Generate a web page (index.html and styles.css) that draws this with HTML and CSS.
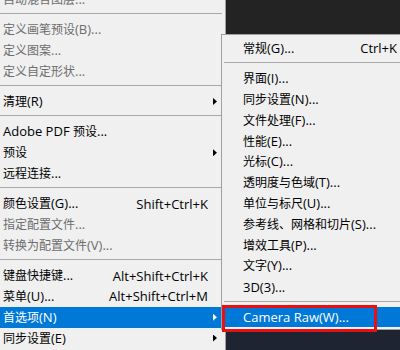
FILE: index.html
```html
<!DOCTYPE html>
<html lang="zh-CN">
<head>
  <meta charset="UTF-8">
  <title>编辑 – 首选项</title>
  <link rel="stylesheet" href="styles.css">
</head>
<body>

  <div class="desktop">
    <ul class="menu main-menu">
      <li class="item off"><span class="label"><span class="zh">自动混合图层</span>...</span></li>
      <li class="sep"></li>
      <li class="item off"><span class="label"><span class="zh">定义画笔预设</span>(B)...</span></li>
      <li class="item off"><span class="label"><span class="zh">定义图案</span>...</span></li>
      <li class="item off"><span class="label"><span class="zh">定义自定形状</span>...</span></li>
      <li class="sep"></li>
      <li class="item more"><span class="label"><span class="zh">清理</span>(R)</span></li>
      <li class="sep"></li>
      <li class="item"><span class="label">Adobe PDF <span class="zh">预设</span>...</span></li>
      <li class="item more"><span class="label"><span class="zh">预设</span></span></li>
      <li class="item"><span class="label"><span class="zh">远程连接</span>...</span></li>
      <li class="sep"></li>
      <li class="item"><span class="label"><span class="zh">颜色设置</span>(G)...</span><span class="key">Shift+Ctrl+K</span></li>
      <li class="item off"><span class="label"><span class="zh">指定配置文件</span>...</span></li>
      <li class="item off"><span class="label"><span class="zh">转换为配置文件</span>(V)...</span></li>
      <li class="sep"></li>
      <li class="item"><span class="label"><span class="zh">键盘快捷键</span>...</span><span class="key">Alt+Shift+Ctrl+K</span></li>
      <li class="item"><span class="label"><span class="zh">菜单</span>(U)...</span><span class="key">Alt+Shift+Ctrl+M</span></li>
      <li class="item more on"><span class="label"><span class="zh">首选项</span>(N)</span></li>
      <li class="item more"><span class="label"><span class="zh">同步设置</span>(E)</span></li>
    </ul>

    <ul class="menu sub-menu">
      <li class="item"><span class="label"><span class="zh">常规</span>(G)...</span><span class="key">Ctrl+K</span></li>
      <li class="sep"></li>
      <li class="item"><span class="label"><span class="zh">界面</span>(I)...</span></li>
      <li class="item"><span class="label"><span class="zh">同步设置</span>(N)...</span></li>
      <li class="item"><span class="label"><span class="zh">文件处理</span>(F)...</span></li>
      <li class="item"><span class="label"><span class="zh">性能</span>(E)...</span></li>
      <li class="item"><span class="label"><span class="zh">光标</span>(C)...</span></li>
      <li class="item"><span class="label"><span class="zh">透明度与色域</span>(T)...</span></li>
      <li class="item"><span class="label"><span class="zh">单位与标尺</span>(U)...</span></li>
      <li class="item"><span class="label"><span class="zh">参考线、网格和切片</span>(S)...</span></li>
      <li class="item"><span class="label"><span class="zh">增效工具</span>(P)...</span></li>
      <li class="item"><span class="label"><span class="zh">文字</span>(Y)...</span></li>
      <li class="item"><span class="label">3D(3)...</span></li>
      <li class="sep"></li>
      <li class="item on"><span class="label">Camera Raw(W)...</span></li>
    </ul>

    <!-- repère rouge autour de Camera Raw -->
    <div class="mark"></div>
  </div>

</body>
</html>
```

FILE: styles.css
```css
* { box-sizing: border-box; margin: 0; padding: 0; }
body {
  background: #232323;
  overflow: hidden;
  font-family: "Open Sans", "Noto Sans CJK SC", sans-serif;
  font-size: 13px;
}
.desktop {
  position: relative;
  width: 400px;
  height: 350px;
  overflow: hidden;
  background: linear-gradient(#232323 331px, #1f2432 331px);
}
.menu {
  list-style: none;
  background: #f0f0f0;
  color: #000;
}
.main-menu {
  width: 226px;
  margin-top: -11px;
  padding-bottom: 6px;
  border-right: 1px solid #a0a0a0;
}
.sub-menu {
  position: absolute;
  left: 221px;
  top: 34px;
  width: 194px;
  padding: 3px 0 2px;
  border: 1px solid #a0a0a0;
}
.item {
  display: flex;
  align-items: center;
  height: 20.8px;
  line-height: 16px;
  white-space: nowrap;
}
.main-menu .item { padding-left: 3px; }
.sub-menu .item { padding-left: 21px; }
.label { flex: 1; }
.zh { font-size: 12px; }
.item::after {
  content: "";
  flex: none;
  width: 4px;
  height: 7px;
  margin: 0 8px 0 5px;
}
.item.more::after {
  background: currentColor;
  clip-path: polygon(0 0, 100% 50%, 0 100%);
}
.off { color: #6d6d6d; }
.on {
  background: #0078d7;
  color: #fff;
}
.sep {
  height: 9.5px;
  padding: 3.5px 3px 0 0;
}
.sub-menu .sep { padding-left: 2px; }
.sep::before {
  content: "";
  display: block;
  height: 1px;
  background: #a8a8a8;
}
.mark {
  position: absolute;
  left: 222px;
  top: 305px;
  width: 155px;
  height: 27px;
  border: 3px solid #e81010;
}
```
